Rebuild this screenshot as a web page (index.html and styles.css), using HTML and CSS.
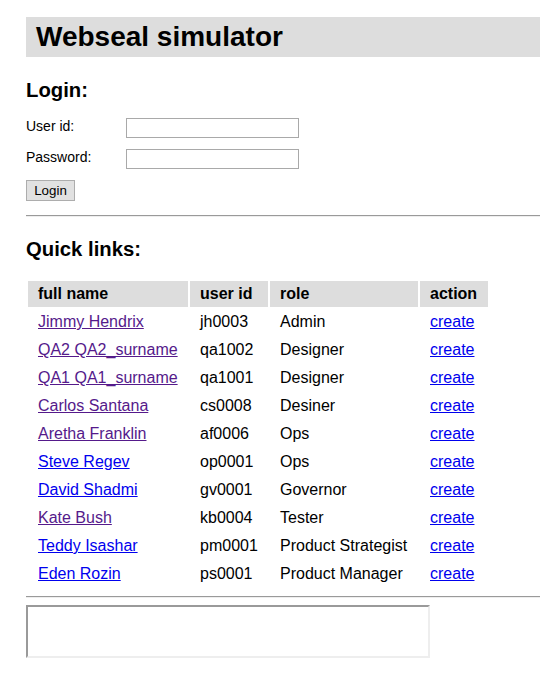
FILE: index.html
```html
<!DOCTYPE html>
<html>
<head>
<meta charset="utf-8">
<title>Webseal simulator</title>
<link rel="stylesheet" href="styles.css">
</head>
<body>
<h1 class="title">Webseal simulator</h1>

<h2 class="section login-heading">Login:</h2>
<form class="login-form">
  <div class="field">
    <label class="field-label" for="uid">User id:</label>
    <input class="field-input" id="uid" type="text">
  </div>
  <div class="field">
    <label class="field-label" for="pwd">Password:</label>
    <input class="field-input" id="pwd" type="password">
  </div>
  <button class="login-btn" type="button">Login</button>
</form>

<hr class="divider divider-top">

<h2 class="section links-heading">Quick links:</h2>
<table class="links">
  <thead>
    <tr><th class="col-name">full name</th><th class="col-id">user id</th><th class="col-role">role</th><th class="col-action">action</th></tr>
  </thead>
  <tbody>
    <tr><td><a class="visited" href="#">Jimmy Hendrix</a></td><td>jh0003</td><td>Admin</td><td><a href="#">create</a></td></tr>
    <tr><td><a class="visited" href="#">QA2 QA2_surname</a></td><td>qa1002</td><td>Designer</td><td><a href="#">create</a></td></tr>
    <tr><td><a class="visited" href="#">QA1 QA1_surname</a></td><td>qa1001</td><td>Designer</td><td><a href="#">create</a></td></tr>
    <tr><td><a class="visited" href="#">Carlos Santana</a></td><td>cs0008</td><td>Desiner</td><td><a href="#">create</a></td></tr>
    <tr><td><a class="visited" href="#">Aretha Franklin</a></td><td>af0006</td><td>Ops</td><td><a href="#">create</a></td></tr>
    <tr><td><a href="#">Steve Regev</a></td><td>op0001</td><td>Ops</td><td><a href="#">create</a></td></tr>
    <tr><td><a href="#">David Shadmi</a></td><td>gv0001</td><td>Governor</td><td><a href="#">create</a></td></tr>
    <tr><td><a class="visited" href="#">Kate Bush</a></td><td>kb0004</td><td>Tester</td><td><a href="#">create</a></td></tr>
    <tr><td><a href="#">Teddy Isashar</a></td><td>pm0001</td><td>Product Strategist</td><td><a href="#">create</a></td></tr>
    <tr><td><a href="#">Eden Rozin</a></td><td>ps0001</td><td>Product Manager</td><td><a href="#">create</a></td></tr>
  </tbody>
</table>

<hr class="divider divider-bottom">

<textarea class="output"></textarea>
</body>
</html>
```

FILE: styles.css
```css
html, body {
  margin: 0;
  padding: 0;
  background: #ffffff;
}

body {
  padding: 17px 0 0 26px;
  font-family: "Liberation Sans", Arial, sans-serif;
  color: #000000;
}

.title {
  margin: 0;
  height: 40px;
  line-height: 40px;
  padding: 0 0 0 10px;
  font-size: 28px;
  font-weight: bold;
  background: #dddddd;
}

.section {
  font-size: 20.3px;
  font-weight: bold;
  line-height: 23px;
}

.login-heading {
  margin: 22px 0 16px 0;
}

.login-form {
  margin: 0;
}

.field {
  display: grid;
  grid-template-columns: 100px 173px;
  align-items: start;
  margin-bottom: 11px;
}

.field-label {
  font-size: 14px;
  line-height: 16px;
}

.field-input {
  box-sizing: border-box;
  width: 173px;
  height: 20px;
  margin: 0;
  padding: 0 2px;
  border: 1px solid #a9a9a9;
  font-family: "Liberation Sans", Arial, sans-serif;
  font-size: 13px;
  background: #ffffff;
}

.login-btn {
  box-sizing: border-box;
  display: block;
  width: 49px;
  height: 21px;
  margin: 0;
  padding: 0;
  border: 1px solid #adadad;
  background: #e1e1e1;
  font-family: "Liberation Sans", Arial, sans-serif;
  font-size: 13.33px;
  color: #000000;
}

.divider {
  height: 0;
  border: 0;
  border-top: 1px solid #9a9a9a;
  border-bottom: 1px solid #eeeeee;
}

.divider-top {
  margin: 14px 0 0 0;
}

.links-heading {
  margin: 21px 0 18px 0;
}

.links {
  border-collapse: separate;
  border-spacing: 2px;
  font-size: 16px;
  line-height: 18px;
  table-layout: fixed;
  width: 464px;
}

.links th,
.links td {
  padding: 4px 10px;
  text-align: left;
  white-space: nowrap;
}

.col-name { width: 140px; }
.col-id { width: 58px; }
.col-role { width: 128px; }
.col-action { width: 48px; }

.links th {
  background: #dddddd;
  font-weight: bold;
}

.links a {
  color: #0000ee;
  text-decoration: underline;
}

.links a.visited {
  color: #551a8b;
}

.divider-bottom {
  margin: 7px 0 0 0;
}

.output {
  display: block;
  box-sizing: border-box;
  width: 404px;
  height: 53px;
  margin: 7px 0 0 0;
  padding: 2px;
  border-style: solid;
  border-width: 2px;
  border-color: #9a9a9a #eeeeee #eeeeee #9a9a9a;
  resize: none;
  font-family: "Liberation Mono", monospace;
  font-size: 13px;
}
```
